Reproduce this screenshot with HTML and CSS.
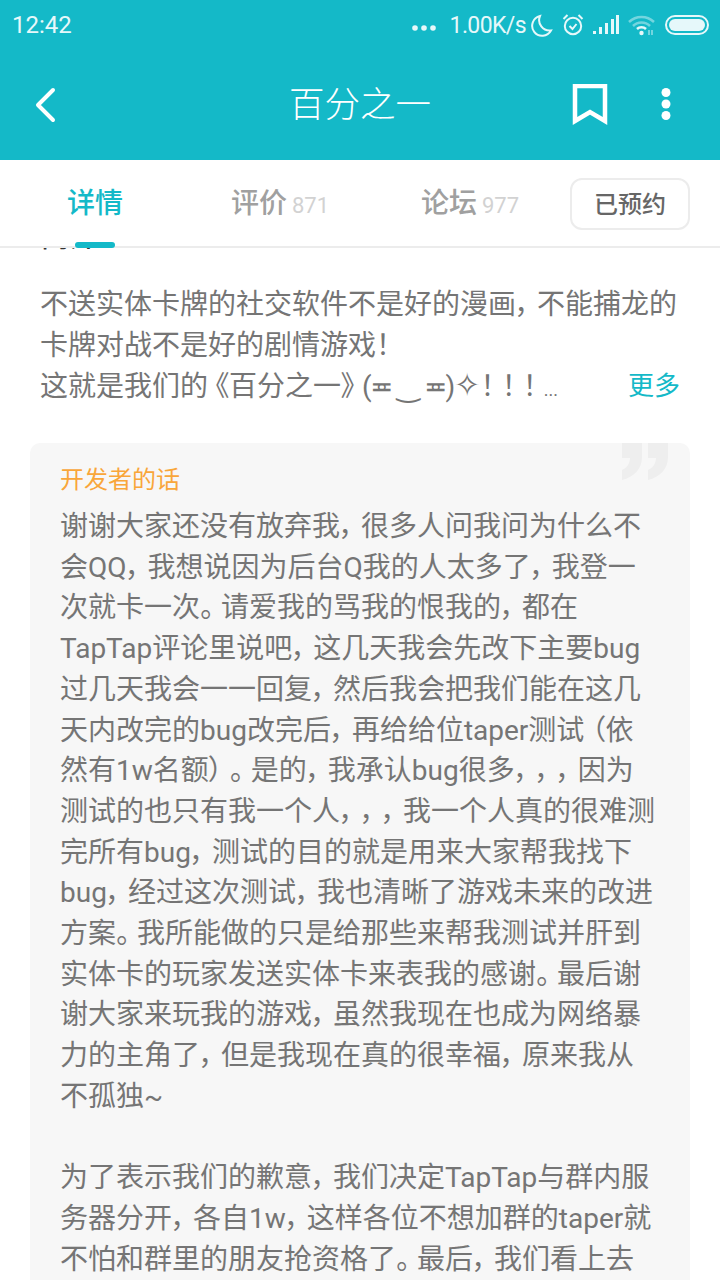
FILE: index.html
```html
<!DOCTYPE html>
<html lang="zh-CN">
	<head>
		<meta charset="UTF-8" />
		<title>百分之一</title>
		<link rel="stylesheet" href="styles.css">
	</head>
	<body>
		<div class="page">
			<div class="status-bar">
				<span class="clock">12:42</span>
				<div class="status-right">
					<svg class="st-dots" width="24" height="6" viewBox="0 0 24 6"><circle cx="3" cy="3" r="2.8"/><circle cx="12" cy="3" r="2.8"/><circle cx="21" cy="3" r="2.8"/></svg>
					<span class="speed">1.00K/s</span>
					<svg class="st-moon" width="22" height="24" viewBox="0 0 22 24"><path d="M9 3 A10 10 0 1 0 20 17.500 A10.500 10.500 0 0 1 9 3Z"/></svg>
					<svg class="st-alarm" width="22" height="24" viewBox="0 0 22 24"><circle cx="11" cy="13" r="8.2"/><path d="M7.500 13l3 3 4-5M1.500 6l4-4M20.500 6l-4-4"/></svg>
					<svg class="st-signal" width="26" height="20" viewBox="0 0 26 20"><rect x="0" y="16" width="3" height="3"/><rect x="6" y="12" width="3" height="7"/><rect x="12" y="8" width="3" height="11"/><rect x="18" y="4" width="3" height="15"/><rect x="23" y="0" width="3" height="19"/></svg>
					<svg class="st-wifi" width="28" height="22" viewBox="0 0 28 22"><path class="faint" d="M1 8 A18 18 0 0 1 26 8"/><path class="faint" d="M5 12 A12 12 0 0 1 22 12"/><path d="M9 15 A6.500 6.500 0 0 1 18 15"/><circle class="dot" cx="13.500" cy="19" r="2.200"/><path class="arrows" d="M21 16v5M24 16v5"/></svg>
					<div class="battery"><div class="battery-fill"></div></div>
				</div>
			</div>

			<header class="app-bar">
				<svg class="back" width="24" height="36" viewBox="0 0 24 36"><path d="M20 3 L5 18 L20 33"/></svg>
				<h1 class="title">百分之一</h1>
				<div class="actions">
					<svg class="bookmark" width="36" height="42" viewBox="0 0 36 42"><path d="M3 2 H33 V37 L18 28 L3 37 Z"/></svg>
					<svg class="more" width="12" height="36" viewBox="0 0 12 36"><circle cx="6" cy="6.500" r="4.500"/><circle cx="6" cy="18" r="4.500"/><circle cx="6" cy="29.500" r="4.500"/></svg>
				</div>
			</header>

			<nav class="tabs">
				<div class="tab tab-active">详情</div>
				<div class="tab">评价<span class="count">871</span></div>
				<div class="tab">论坛<span class="count">977</span></div>
				<button class="reserve">已预约</button>
			</nav>

			<main class="content">
				<div class="clipped-head"><span>简介</span></div>
				<div class="intro">
					<p>不送实体卡牌的社交软件不是好的漫画<span class="pn">，</span>不能捕龙的</p>
					<p>卡牌对战不是好的剧情游戏<span class="pn">！</span></p>
					<div class="intro-last">
						<span>这就是我们的<span class="pn-open">《</span>百分之一<span class="pn">》</span><span class="kaomoji">(≖ ‿ ≖)</span><span class="spark">✧</span><span class="pn">！</span><span class="pn">！</span><span class="pn">！</span><span class="ellipsis">...</span></span>
						<span class="more-link">更多</span>
					</div>
				</div>

				<section class="dev-note">
					<svg class="quote" width="46" height="37" viewBox="0 0 46 37"><path d="M0 0H20V14C20 26 12 34 0 37V27C5 25 8 20 8 15H0Z"/><path d="M26 0H46V14C46 26 38 34 26 37V27C31 25 34 20 34 15H26Z"/></svg>
					<h2>开发者的话</h2>
					<p>谢谢大家还没有放弃我<span class="pn">，</span>很多人问我问为什么不</p>
					<p>会QQ<span class="pn">，</span>我想说因为后台Q我的人太多了<span class="pn">，</span>我登一</p>
					<p>次就卡一次<span class="pn">。</span>请爱我的骂我的恨我的<span class="pn">，</span>都在</p>
					<p>TapTap评论里说吧<span class="pn">，</span>这几天我会先改下主要bug</p>
					<p>过几天我会一一回复<span class="pn">，</span>然后我会把我们能在这几</p>
					<p>天内改完的bug改完后<span class="pn">，</span>再给给位taper测试<span class="pn-open">（</span>依</p>
					<p>然有1w名额<span class="pn">）</span><span class="pn">。</span>是的<span class="pn">，</span>我承认bug很多<span class="pn">，</span><span class="pn">，</span><span class="pn">，</span>因为</p>
					<p>测试的也只有我一个人<span class="pn">，</span><span class="pn">，</span><span class="pn">，</span>我一个人真的很难测</p>
					<p>完所有bug<span class="pn">，</span>测试的目的就是用来大家帮我找下</p>
					<p>bug<span class="pn">，</span>经过这次测试<span class="pn">，</span>我也清晰了游戏未来的改进</p>
					<p>方案<span class="pn">。</span>我所能做的只是给那些来帮我测试并肝到</p>
					<p>实体卡的玩家发送实体卡来表我的感谢<span class="pn">。</span>最后谢</p>
					<p>谢大家来玩我的游戏<span class="pn">，</span>虽然我现在也成为网络暴</p>
					<p>力的主角了<span class="pn">，</span>但是我现在真的很幸福<span class="pn">，</span>原来我从</p>
					<p>不孤独~</p>
					<p class="blank"></p>
					<p>为了表示我们的歉意<span class="pn">，</span>我们决定TapTap与群内服</p>
					<p>务器分开<span class="pn">，</span>各自1w<span class="pn">，</span>这样各位不想加群的taper就</p>
					<p>不怕和群里的朋友抢资格了<span class="pn">。</span>最后<span class="pn">，</span>我们看上去</p>
				</section>
			</main>
		</div>
	</body>
</html>
```

FILE: styles.css
```css
* {
	box-sizing: border-box;
}

html,
body {
	margin: 0;
	padding: 0;
	background: #fff;
}

body {
	font-family: Roboto, 'Noto Sans CJK SC', sans-serif;
}

p,
h1,
h2 {
	margin: 0;
	font-weight: normal;
}

.page {
	width: 720px;
	height: 1280px;
	overflow: hidden;
}

.status-bar {
	height: 50px;
	background: #14b9c8;
	color: #e6f8fa;
	display: flex;
	align-items: center;
	justify-content: space-between;
	padding: 0 11px 0 12px;
}

.clock {
	font-size: 24px;
}

.status-right {
	display: flex;
	align-items: center;
}

.speed {
	font-size: 23px;
	margin-left: 14px;
	letter-spacing: -0.6px;
}

.st-dots {
	fill: #e6f8fa;
	margin-top: 6px;
}

.st-moon {
	fill: none;
	stroke: #e6f8fa;
	stroke-width: 2;
	margin-left: 5px;
}

.st-alarm {
	fill: none;
	stroke: #e6f8fa;
	stroke-width: 2;
	margin-left: 9px;
}

.st-signal {
	fill: #e6f8fa;
	margin-left: 9px;
}

.st-wifi {
	fill: none;
	stroke: #e6f8fa;
	stroke-width: 2.500;
	margin-left: 9px;
}

.st-wifi .faint {
	opacity: 0.45;
}

.st-wifi .dot {
	fill: #e6f8fa;
	stroke: none;
}

.st-wifi .arrows {
	stroke-width: 1.500;
	opacity: 0.6;
}

.battery {
	width: 44px;
	height: 20px;
	margin-left: 9px;
	border: 2px solid #e6f8fa;
	border-radius: 10px;
	padding: 2px;
}

.battery-fill {
	height: 100%;
	background: #e6f8fa;
	border-radius: 6px;
}

.app-bar {
	height: 110px;
	background: #14b9c8;
	display: grid;
	grid-template-columns: 1fr auto 1fr;
	align-items: center;
	padding: 0 48px;
}

.back {
	fill: none;
	stroke: #fff;
	stroke-width: 4;
	stroke-linecap: round;
	stroke-linejoin: round;
	margin-left: -15px;
}

.title {
	color: #fff;
	font-size: 35.500px;
	font-weight: 300;
	margin-bottom: 7px;
}

.actions {
	display: flex;
	align-items: center;
	justify-content: flex-end;
}

.bookmark {
	fill: none;
	stroke: #fff;
	stroke-width: 4.500;
	margin-right: 52px;
}

.more {
	fill: #fff;
	margin-bottom: 2px;
}

.tabs {
	height: 88px;
	background: #fff;
	border-bottom: 2px solid #ececec;
	display: flex;
	align-items: center;
	padding-right: 30px;
}

.tab {
	width: 190px;
	text-align: center;
	font-size: 28px;
	font-weight: 500;
	color: #a0a0a0;
	position: relative;
	height: 100%;
	line-height: 88px;
}

.tab-active {
	width: 185px;
	padding-left: 5px;
	color: #14b9c8;
}

.tab-active::after {
	content: '';
	position: absolute;
	left: 75px;
	bottom: -2px;
	width: 40px;
	height: 6px;
	background: #14b9c8;
	border-radius: 3px;
}

.count {
	font-size: 22px;
	font-weight: normal;
	color: #d2d2d2;
	margin-left: 5px;
}

.reserve {
	margin-left: auto;
	margin-top: 2px;
	width: 120px;
	height: 52px;
	background: #fff;
	border: 2px solid #ececec;
	border-radius: 12px;
	color: #666;
	font-family: inherit;
	font-size: 24px;
	font-weight: 500;
	padding: 0 0 3px;
}

.content {
	padding: 0 30px;
}

.clipped-head {
	height: 3px;
	padding-left: 11px;
	overflow: hidden;
	display: flex;
	align-items: flex-end;
	font-size: 28px;
	font-weight: 500;
	line-height: 26px;
	color: #333;
}

.intro {
	margin-top: 33px;
	padding: 0 10px;
	font-size: 28px;
	line-height: 41px;
	color: #757575;
	font-feature-settings: 'palt';
	white-space: nowrap;
}

.intro-last {
	display: flex;
	justify-content: space-between;
}

/* punctuation is wider than palt gives, narrower than full width */
.pn {
	margin-right: 7px;
}

.pn-open {
	margin-left: 7px;
}

.kaomoji {
	letter-spacing: -1.500px;
}

.spark {
	font-family: 'DejaVu Sans', sans-serif;
	font-size: 32px;
	line-height: 1;
}

.ellipsis {
	font-size: 18px;
}

.more-link {
	color: #14b9c8;
	font-size: 26px;
}

.dev-note {
	position: relative;
	margin-top: 33px;
	background: #f7f7f7;
	border-radius: 10px;
	padding: 19px 30px 0;
	height: 900px;
	font-size: 28px;
	line-height: 40.700px;
	color: #757575;
	font-feature-settings: 'palt';
	white-space: nowrap;
}

.dev-note h2 {
	font-size: 24px;
	line-height: 36px;
	color: #f9a63a;
	margin-bottom: 9px;
}

.blank {
	height: 40.700px;
}

.quote {
	position: absolute;
	top: 0;
	right: 22px;
	fill: #eeeeee;
}
```
